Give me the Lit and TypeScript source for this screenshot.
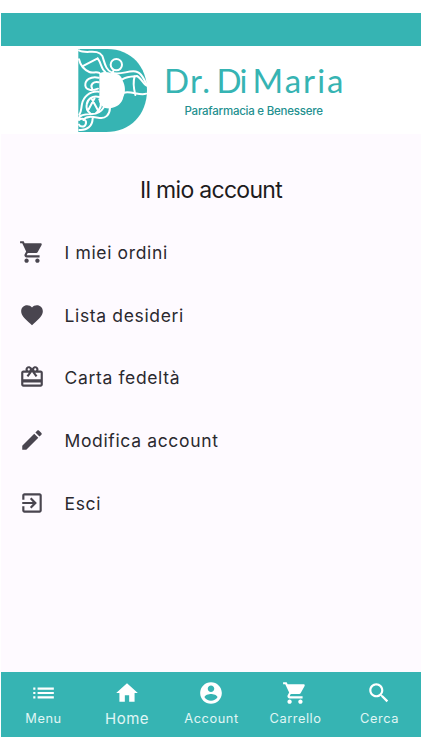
import { LitElement, html, svg, css } from "lit";
import { customElement, property } from "lit/decorators.js";
import { classMap } from "lit/directives/class-map.js";

const icons: Record<string, string> = {
  cart: "M7 18c-1.1 0-1.99.9-1.99 2S5.9 22 7 22s2-.9 2-2-.9-2-2-2zM1 2v2h2l3.6 7.59-1.35 2.45c-.16.28-.25.61-.25.96 0 1.1.9 2 2 2h12v-2H7.42c-.14 0-.25-.11-.25-.25l.03-.12.9-1.63h7.45c.75 0 1.41-.41 1.75-1.03l3.58-6.49c.08-.14.12-.31.12-.48 0-.55-.45-1-1-1H5.21l-.94-2H1zm16 16c-1.1 0-1.99.9-1.99 2s.89 2 1.99 2 2-.9 2-2-.9-2-2-2z",
  heart:
    "M12 21.35l-1.45-1.32C5.4 15.36 2 12.28 2 8.5 2 5.42 4.42 3 7.5 3c1.74 0 3.41.81 4.5 2.09C13.09 3.81 14.76 3 16.5 3 19.58 3 22 5.42 22 8.5c0 3.78-3.4 6.86-8.55 11.54L12 21.35z",
  gift: "M20 6h-2.18c.11-.31.18-.65.18-1 0-1.66-1.34-3-3-3-1.05 0-1.96.54-2.5 1.35l-.5.67-.5-.68C10.96 2.54 10.05 2 9 2 7.34 2 6 3.34 6 5c0 .35.07.69.18 1H4c-1.11 0-1.99.89-1.99 2L2 19c0 1.11.89 2 2 2h16c1.11 0 2-.89 2-2V8c0-1.11-.89-2-2-2zm-5-2c.55 0 1 .45 1 1s-.45 1-1 1-1-.45-1-1 .45-1 1-1zM9 4c.55 0 1 .45 1 1s-.45 1-1 1-1-.45-1-1 .45-1 1-1zm11 15H4v-2h16v2zm0-5H4V8h5.08L7 10.83 8.62 12 11 8.76l1-1.36 1 1.36L15.38 12 17 10.83 14.92 8H20v6z",
  edit: "M3 17.25V21h3.75L17.81 9.94l-3.75-3.75L3 17.25zM20.71 7.04c.39-.39.39-1.02 0-1.41l-2.34-2.34c-.39-.39-1.02-.39-1.41 0l-1.83 1.83 3.75 3.75 1.83-1.83z",
  exit: "M10.09 15.59L11.5 17l5-5-5-5-1.41 1.41L12.67 11H3v2h9.67l-2.58 2.59zM19 3H5c-1.11 0-2 .9-2 2v4h2V5h14v14H5v-4H3v4c0 1.1.89 2 2 2h14c1.1 0 2-.9 2-2V5c0-1.1-.9-2-2-2z",
  list: "M3 13h2v-2H3v2zm0 4h2v-2H3v2zm0-8h2V7H3v2zm4 4h15v-2H7v2zm0 4h15v-2H7v2zM7 7v2h15V7H7z",
  home: "M10 20v-6h4v6h5v-8h3L12 3 2 12h3v8z",
  account:
    "M12 2C6.48 2 2 6.48 2 12s4.48 10 10 10 10-4.48 10-10S17.52 2 12 2zm0 3c1.66 0 3 1.34 3 3s-1.34 3-3 3-3-1.34-3-3 1.34-3 3-3zm0 14.2c-2.5 0-4.71-1.28-6-3.22.03-1.99 4-3.08 6-3.08 1.99 0 5.97 1.09 6 3.08-1.29 1.94-3.5 3.22-6 3.22z",
  search:
    "M15.5 14h-.79l-.28-.27C15.41 12.59 16 11.11 16 9.5 16 5.91 13.09 3 9.5 3S3 5.91 3 9.5 5.91 16 9.5 16c1.61 0 3.09-.59 4.23-1.57l.27.28v.79l5 4.99L20.49 19l-4.99-5zm-6 0C7.01 14 5 11.99 5 9.5S7.01 5 9.5 5 14 7.01 14 9.5 11.99 14 9.5 14z",
};

@customElement("app-icon")
export class AppIcon extends LitElement {
  @property()
  name = "";

  static styles = css`
    :host {
      display: block;
      width: 26px;
      height: 26px;
    }

    svg {
      display: block;
      width: 100%;
      height: 100%;
      fill: currentColor;
    }
  `;

  render() {
    return html`<svg viewBox="0 0 24 24">${svg`<path d=${icons[this.name]} />`}</svg>`;
  }
}

@customElement("brand-logo")
export class BrandLogo extends LitElement {
  static styles = css`
    :host {
      display: block;
    }

    svg {
      display: block;
    }

    .mark {
      fill: #36b4b3;
    }

    .hole {
      fill: #fff;
    }

    .line {
      fill: none;
      stroke: #fff;
      stroke-width: 6;
      stroke-linecap: round;
      stroke-linejoin: round;
    }

    .name {
      font: 400 33px Lato, sans-serif;
      fill: #36b4b3;
    }

    .tagline {
      font: 500 11.5px Inter, sans-serif;
      fill: #23908f;
    }
  `;

  render() {
    return html`
      <svg width="280" height="88" viewBox="71 46 280 88">
        <g transform="translate(70 40) scale(0.3333)">
          <path
            class="mark"
            d="M25 27H112C184 27 231 81 231 150C231 224 181 276 108 276H25Z"
          />
          <path
            class="hole"
            d="M88 100C102 93 119 95 127 102C143 99 155 108 157 120C167 137 167 158 160 171C157 190 141 202 120 205C104 207 91 197 88 185Z"
          />
          <!-- wings -->
          <path
            class="line"
            d="M27 31C48 44 82 24 97 48C104 68 107 91 126 98C151 108 181 87 202 96C218 102 222 119 230 134"
          />
          <path
            class="line"
            d="M83 55C95 70 92 86 106 96M83 55L41 77M27 58C31 76 44 90 58 96C69 101 77 93 88 99M157 118C172 108 190 109 201 108C212 113 222 133 230 137M194 109C188 127 191 145 196 165M161 158C185 152 208 168 229 161"
          />
          <!-- staff -->
          <circle class="line" cx="139" cy="74" r="17" />
          <path class="line" d="M131 91L126 101" />
          <!-- snakes -->
          <path
            class="line"
            d="M86 113C62 107 44 121 46 137C48 151 66 153 84 146M86 127C70 123 60 135 66 145M86 155C58 153 40 172 36 192C33 207 34 216 28 224M88 171C66 165 52 178 50 194C48 206 52 214 60 219M74 174L56 208M66 178L85 213M102 201C92 218 82 222 66 222C46 222 26 224 26 238M88 178C97 192 92 208 76 221M120 204C119 225 106 236 90 234C70 231 48 226 40 240M27 240C38 231 52 241 47 253C43 263 30 261 27 254M68 236C67 258 52 272 28 270"
          />
        </g>
        <text class="name" y="92.5">
          <tspan x="164" textLength="46">Dr.</tspan>
          <tspan x="216.5" textLength="31">Di</tspan>
          <tspan x="252.5" textLength="91">Maria</tspan>
        </text>
        <text class="tagline" x="184.5" y="115" textLength="138.5">
          Parafarmacia e Benessere
        </text>
      </svg>
    `;
  }
}

@customElement("app-root")
export class AppRoot extends LitElement {
  private entries = [
    { icon: "cart", label: "I miei ordini" },
    { icon: "heart", label: "Lista desideri" },
    { icon: "gift", label: "Carta fedeltà" },
    { icon: "edit", label: "Modifica account" },
    { icon: "exit", label: "Esci" },
  ];

  private tabs = [
    { icon: "list", label: "Menu" },
    { icon: "home", label: "Home", active: true },
    { icon: "account", label: "Account" },
    { icon: "cart", label: "Carrello" },
    { icon: "search", label: "Cerca" },
  ];

  static styles = css`
    :host {
      display: flex;
      flex-direction: column;
      box-sizing: border-box;
      width: 422px;
      height: 750px;
      padding: 13px 1px;
      background: #fff;
      font-family: Inter, sans-serif;
      overflow: hidden;
    }

    .status {
      height: 32.5px;
      flex: none;
      background: #36b4b3;
    }

    header {
      display: flex;
      justify-content: center;
      height: 88.5px;
      flex: none;
      padding-top: 0.5px;
      box-sizing: border-box;
    }

    main {
      flex: 1;
      background: #fefaff;
    }

    h1 {
      margin: 0;
      padding-top: 40px;
      font-size: 23px;
      line-height: 32px;
      font-weight: 400;
      letter-spacing: -0.7px;
      text-align: center;
      color: #1d1b20;
    }

    ul {
      list-style: none;
      margin: 0;
      padding: 14.5px 0 0 18px;
    }

    li {
      display: flex;
      align-items: center;
      gap: 19.5px;
      height: 62.7px;
      font-size: 17.5px;
      letter-spacing: 0.65px;
      color: #2b292f;
    }

    li span {
      padding-top: 1px;
    }

    li app-icon {
      color: #49454f;
    }

    nav {
      display: grid;
      grid-template-columns: repeat(5, 1fr);
      height: 65px;
      flex: none;
      background: #36b4b3;
      color: #fff;
    }

    .tab {
      display: flex;
      flex-direction: column;
      align-items: center;
      padding-top: 8px;
      font-size: 12.8px;
      letter-spacing: 0.55px;
    }

    .tab span {
      line-height: 26px;
      padding-left: 1px;
      color: #e0f6f5;
    }

    .active {
      font-size: 15px;
      letter-spacing: 0.5px;
    }

    .active span {
      line-height: 25px;
      padding-left: 0;
    }
  `;

  render() {
    return html`
      <div class="status"></div>
      <header><brand-logo></brand-logo></header>
      <main>
        <h1>Il mio account</h1>
        <ul>
          ${this.entries.map(
            (e) => html`<li><app-icon name=${e.icon}></app-icon><span>${e.label}</span></li>`
          )}
        </ul>
      </main>
      <nav>
        ${this.tabs.map(
          (t) => html`
            <div class=${classMap({ tab: true, active: !!t.active })}>
              <app-icon name=${t.icon}></app-icon>
              <span>${t.label}</span>
            </div>
          `
        )}
      </nav>
    `;
  }
}
